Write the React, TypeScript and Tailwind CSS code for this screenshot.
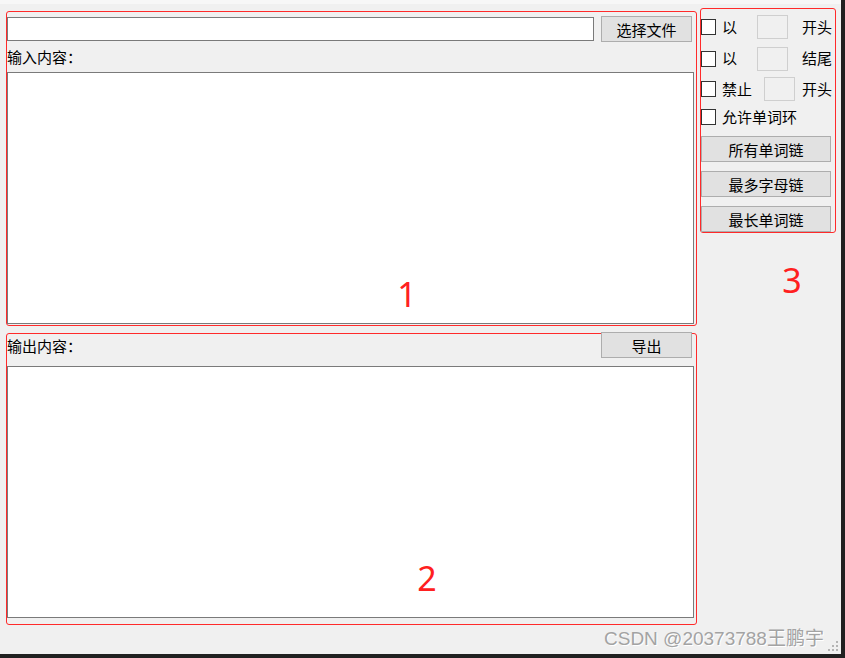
import React from "react";

const font = "font-['Noto_Sans_CJK_SC','Noto_Sans',sans-serif]";

const Btn = ({ label, className = "" }: { label: string; className?: string }) => (
  <button
    className={`h-[26px] bg-[#e1e1e1] border border-[#adadad] text-[15px] leading-none text-black flex items-center justify-center ${className}`}
  >
    {label}
  </button>
);

const Check = () => <div className="w-[15px] h-[16px] border border-[#333333] bg-white shrink-0" />;

const SmallBox = ({ className = "" }: { className?: string }) => (
  <div className={`w-[31px] h-[24px] border border-[#cfcfcf] bg-[#f0f0f0] shrink-0 ${className}`} />
);

const Marker = ({ n, className }: { n: string; className: string }) => (
  <span
    className={`absolute w-[40px] text-center text-[34px] leading-none text-[#ff2020] font-['Noto_Sans',sans-serif] ${className}`}
  >
    {n}
  </span>
);

export default function App() {
  return (
    <div className={`relative w-[845px] h-[658px] bg-[#202020] ${font}`}>
      <div className="w-[841px] h-[654px] bg-[#f0f0f0] flex flex-col">
        <div className="h-[4px] bg-[#f7f7f7]" />
        <div className="flex items-start pl-[6px] pt-[4px] gap-[3px]">
          {/* left column */}
          <div className="w-[691px] mt-[3px] flex flex-col">
            {/* area 1 */}
            <div className="relative h-[315px] border border-[#ff2a2a] rounded-[3px] flex flex-col">
              <div className="h-[26px] mt-[4px] flex items-center">
                <input className="w-[587px] h-[24px] border border-[#7a7a7a] bg-white outline-none" />
                <Btn label="选择文件" className="w-[91px] ml-[7px]" />
              </div>
              <div className="h-[30px] flex items-center text-[15px]">输入内容：</div>
              <textarea
                readOnly
                className="w-[687px] h-[252px] border border-[#7a7a7a] bg-white resize-none outline-none"
              />
              <Marker n="1" className="left-[380px] top-[265px]" />
            </div>

            {/* area 2 */}
            <div className="relative h-[292px] mt-[7px] border border-[#ff2a2a] rounded-[3px] flex flex-col">
              <div className="h-[32px] flex items-start">
                <div className="w-[594px] h-[24px] flex items-center text-[15px]">输出内容：</div>
                <Btn label="导出" className="w-[91px] -mt-[2px]" />
              </div>
              <textarea
                readOnly
                className="w-[687px] h-[252px] border border-[#7a7a7a] bg-white resize-none outline-none"
              />
              <Marker n="2" className="left-[400px] top-[227px]" />
            </div>
          </div>

          {/* right column, area 3 */}
          <div className="w-[136px] border border-[#ff2a2a] rounded-[3px] flex flex-col pt-[6px] text-[15px]">
            <div className="h-[24px] flex items-center">
              <Check />
              <span className="ml-[6px] w-[35px]">以</span>
              <SmallBox />
              <span className="ml-[14px]">开头</span>
            </div>
            <div className="h-[23px] mt-[8px] flex items-center">
              <Check />
              <span className="ml-[6px] w-[35px]">以</span>
              <SmallBox />
              <span className="ml-[14px]">结尾</span>
            </div>
            <div className="h-[24px] mt-[7px] flex items-center">
              <Check />
              <span className="ml-[6px] w-[42px]">禁止</span>
              <SmallBox />
              <span className="ml-[7px]">开头</span>
            </div>
            <div className="h-[22px] mt-[5px] flex items-center">
              <Check />
              <span className="ml-[6px]">允许单词环</span>
            </div>
            <Btn label="所有单词链" className="w-[130px] mt-[8px]" />
            <Btn label="最多字母链" className="w-[130px] mt-[9px]" />
            <Btn label="最长单词链" className="w-[130px] mt-[9px]" />
          </div>
        </div>
      </div>

      <Marker n="3" className="left-[772px] top-[263px]" />

      <span className="absolute left-[604px] top-[629px] text-[19px] leading-none text-[#a3a3a3] whitespace-nowrap font-['Liberation_Sans','Noto_Sans_CJK_SC',sans-serif] [text-shadow:1px_1px_0_#ffffff]">
        CSDN @20373788王鹏宇
      </span>

      {/* size grip */}
      <svg className="absolute left-[828px] top-[640px]" width="12" height="12" viewBox="0 0 12 12">
        <g fill="#b4b4b4">
          <rect x="8" y="1" width="2" height="2" />
          <rect x="4" y="5" width="2" height="2" />
          <rect x="8" y="5" width="2" height="2" />
          <rect x="0" y="9" width="2" height="2" />
          <rect x="4" y="9" width="2" height="2" />
          <rect x="8" y="9" width="2" height="2" />
        </g>
      </svg>
    </div>
  );
}
